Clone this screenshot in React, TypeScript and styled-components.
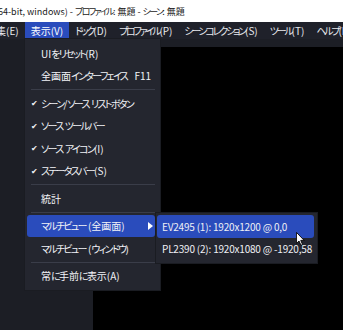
import React, { FC } from "react";
import styled, { createGlobalStyle } from "styled-components";

const GlobalStyle = createGlobalStyle`
  html, body {
    margin: 0;
    padding: 0;
    background: #000;
  }
  body {
    font-family: "Noto Sans CJK JP", "Noto Sans", sans-serif;
    font-feature-settings: "palt";
    -webkit-font-smoothing: antialiased;
  }
`;

const Kana = styled.span`
  letter-spacing: -1.7px;
`;

const Window = styled.div`
  position: relative;
  width: 343px;
  height: 330px;
  overflow: hidden;
  display: flex;
  flex-direction: column;
  background: #1c1e25;
`;

const TitleBar = styled.div`
  height: 22px;
  flex-shrink: 0;
  background: #ffffff;
  color: #1a1a1a;
  font-size: 9px;
  line-height: 24px;
  white-space: nowrap;
  margin-left: -2px;
`;

const MenuBar = styled.div`
  height: 17px;
  flex-shrink: 0;
  display: flex;
  align-items: stretch;
  background: #1f212a;
  color: #e8e9ee;
  font-size: 10px;
  white-space: nowrap;
  margin-left: -20px;

  ${Kana} {
    letter-spacing: -2.2px;
  }
`;

const MenuBarItem = styled.div<{ $active?: boolean }>`
  display: flex;
  align-items: center;
  padding: 0 6px;
  background: ${(p) => (p.$active ? "#2a4cbc" : "transparent")};
  color: ${(p) => (p.$active ? "#ffffff" : "#e8e9ee")};
`;

const Body = styled.div`
  flex: 1;
  display: flex;
`;

const Sidebar = styled.div`
  width: 93px;
  flex-shrink: 0;
  background: #1c1e25;
`;

const Main = styled.div`
  flex: 1;
  display: flex;
  flex-direction: column;
`;

const MainTop = styled.div`
  height: 8px;
  background: #1c1e25;
`;

const Preview = styled.div`
  flex: 1;
  background: #000000;
`;

const Menu = styled.div`
  position: absolute;
  left: 25px;
  top: 39px;
  width: 135px;
  padding: 3px 5px 3px 2px;
  box-sizing: border-box;
  background: #24262f;
  box-shadow: 0 0 0 1px #1a1c22;
  color: #f2f3f7;
  font-size: 10px;
`;

const Item = styled.div<{ $active?: boolean }>`
  position: relative;
  height: 22.5px;
  display: flex;
  align-items: center;
  padding-left: 14px;
  padding-right: 2px;
  border-radius: 3px;
  white-space: nowrap;
  background: ${(p) => (p.$active ? "#2a4cbc" : "transparent")};
`;

const Label = styled.span`
  flex: 1;
`;

const Shortcut = styled.span`
  margin-right: 2px;
`;

const Check = styled.span`
  position: absolute;
  left: 4px;
  top: 50%;
  transform: translateY(-50%);
  font-size: 8px;
  line-height: 1;
`;

const Arrow = styled.span`
  width: 0;
  height: 0;
  border-top: 4px solid transparent;
  border-bottom: 4px solid transparent;
  border-left: 5px solid #ffffff;
`;

const Separator = styled.div`
  height: 1px;
  margin: 2px 0 2px 4px;
  background: #3a3d49;
`;

const SubMenu = styled.div`
  position: absolute;
  left: 129px;
  top: -1.5px;
  width: 161px;
  padding: 2px 3px 2.5px 1px;
  box-sizing: border-box;
  background: #24262f;
  box-shadow: 0 0 0 1px #1a1c22;
`;

const SubItem = styled.div<{ $active?: boolean }>`
  height: 22.5px;
  display: flex;
  align-items: center;
  padding-left: 5px;
  border-radius: 3px;
  white-space: nowrap;
  letter-spacing: -0.2px;
  color: #eef0f5;
  background: ${(p) => (p.$active ? "#2a4cbc" : "transparent")};
`;

const Cursor = styled.svg`
  position: absolute;
  left: 296px;
  top: 232px;
`;

// Windows UI fonts draw kana much narrower than Noto, so tighten kana runs
const Jp: FC<{ text: string }> = ({ text }) => (
  <>
    {text.split(/([\u3040-\u30ff]+)/).map((part, i) =>
      /[\u3040-\u30ff]/.test(part) ? <Kana key={i}>{part}</Kana> : part
    )}
  </>
);

const barItems = ["編集(E)", "表示(V)", "ドック(D)", "プロファイル(P)", "シーンコレクション(S)", "ツール(T)", "ヘルプ(H)"];

const App: FC = () => {
  return (
    <>
      <GlobalStyle />
      <Window>
        <TitleBar>
          <Jp text="64-bit, windows) - プロファイル: 無題 - シーン: 無題" />
        </TitleBar>
        <MenuBar>
          {barItems.map((t) => (
            <MenuBarItem key={t} $active={t === "表示(V)"}>
              <Jp text={t} />
            </MenuBarItem>
          ))}
        </MenuBar>
        <Body>
          <Sidebar />
          <Main>
            <MainTop />
            <Preview />
          </Main>
        </Body>

        <Menu>
          <Item>
            <Label><Jp text="UIをリセット(R)" /></Label>
          </Item>
          <Item>
            <Label><Jp text="全画面インターフェイス" /></Label>
            <Shortcut>F11</Shortcut>
          </Item>
          <Separator />
          <Item>
            <Check>✔</Check>
            <Label><Jp text="シーン/ソース リストボタン" /></Label>
          </Item>
          <Item>
            <Check>✔</Check>
            <Label><Jp text="ソース ツールバー" /></Label>
          </Item>
          <Item>
            <Check>✔</Check>
            <Label><Jp text="ソース アイコン(I)" /></Label>
          </Item>
          <Item>
            <Check>✔</Check>
            <Label><Jp text="ステータスバー(S)" /></Label>
          </Item>
          <Separator />
          <Item>
            <Label>統計</Label>
          </Item>
          <Separator />
          <Item $active>
            <Label><Jp text="マルチビュー (全画面)" /></Label>
            <Arrow />
            <SubMenu>
              <SubItem $active>EV2495 (1): 1920x1200 @ 0,0</SubItem>
              <SubItem>PL2390 (2): 1920x1080 @ -1920,58</SubItem>
            </SubMenu>
          </Item>
          <Item>
            <Label><Jp text="マルチビュー (ウィンドウ)" /></Label>
          </Item>
          <Separator />
          <Item>
            <Label><Jp text="常に手前に表示(A)" /></Label>
          </Item>
        </Menu>

        <Cursor width="9" height="14" viewBox="0 0 12 19">
          <path
            d="M0.5 0.5 L0.5 15.5 L4 12.2 L6.6 18 L8.8 17 L6.3 11.4 L11 11.4 Z"
            fill="#ffffff"
            stroke="#000000"
            strokeWidth="1.2"
            strokeLinejoin="round"
          />
        </Cursor>
      </Window>
    </>
  );
};

export default App;
